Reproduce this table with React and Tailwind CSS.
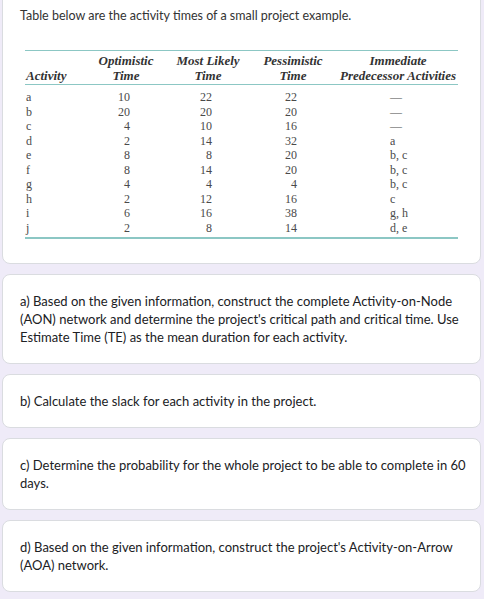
import React from 'react';

const rows = [
  ['a', '10', '22', '22', '—'],
  ['b', '20', '20', '20', '—'],
  ['c', '4', '10', '16', '—'],
  ['d', '2', '14', '32', 'a'],
  ['e', '8', '8', '20', 'b, c'],
  ['f', '8', '14', '20', 'b, c'],
  ['g', '4', '4', '4', 'b, c'],
  ['h', '2', '12', '16', 'c'],
  ['i', '6', '16', '38', 'g, h'],
  ['j', '2', '8', '14', 'd, e'],
];

const questions = [
  "a) Based on the given information, construct the complete Activity-on-Node (AON) network and determine the project's critical path and critical time. Use Estimate Time (TE) as the mean duration for each activity.",
  'b) Calculate the slack for each activity in the project.',
  'c) Determine the probability for the whole project to be able to complete in 60 days.',
  "d) Based on the given information, construct the project's Activity-on-Arrow (AOA) network.",
];

const serif = { fontFamily: '"Liberation Serif", "Times New Roman", serif' };

const ActivityTable = () => (
  <div className="ml-[5px] mt-[25px] mb-[7px] w-[433px]" style={serif}>
    <div className="h-px bg-[#8cc7c4]" />
    <div className="grid grid-cols-[70px_62px_102px_68px_131px] pt-[2px] pb-px text-[13px] leading-[15px] font-bold italic text-[#333]">
      <div className="flex items-end pl-px">Activity</div>
      <div className="text-center">Optimistic<br />Time</div>
      <div className="text-center">Most Likely<br />Time</div>
      <div className="text-center">Pessimistic<br />Time</div>
      <div className="pl-[11px] text-center whitespace-nowrap">Immediate<br />Predecessor Activities</div>
    </div>
    <div className="h-px bg-[#8cc7c4]" />
    <div className="pt-[5px] pb-[2px] text-[12px] leading-[14.5px] text-[#4a4a4a]">
      {rows.map((r) => (
        <div key={r[0]} className="grid grid-cols-[70px_62px_102px_68px_131px]">
          <div className="pl-px">{r[0]}</div>
          <div className="text-right pr-[27px]">{r[1]}</div>
          <div className="text-right pr-[47px]">{r[2]}</div>
          <div className="text-right pr-[30px]">{r[3]}</div>
          <div className="pl-[63px]">{r[4]}</div>
        </div>
      ))}
    </div>
    <div className="h-[1.5px] bg-[#8cc7c4]" />
  </div>
);

const Card = ({ children, className = '' }) => (
  <div className={`bg-white border border-[#dadce0] rounded-lg pl-[17px] pr-[12px] py-[17px] ${className}`}>
    {children}
  </div>
);

export default function App() {
  return (
    <div
      className="min-h-[599px] bg-[#efebf8] pl-[2px] pr-[3px] pb-[6px] overflow-hidden text-[#202124]"
      style={{ fontFamily: 'Lato, "Noto Sans", sans-serif' }}
    >
      <div className="flex flex-col gap-[10px]">
        <Card className="-mt-[11px]">
          <p className="text-[12.5px] leading-[18px] text-[#333]">
            Table below are the activity times of a small project example.
          </p>
          <ActivityTable />
        </Card>
        {questions.map((q) => (
          <Card key={q}>
            <p className="text-[13px] leading-[18px]">{q}</p>
          </Card>
        ))}
      </div>
    </div>
  );
}
